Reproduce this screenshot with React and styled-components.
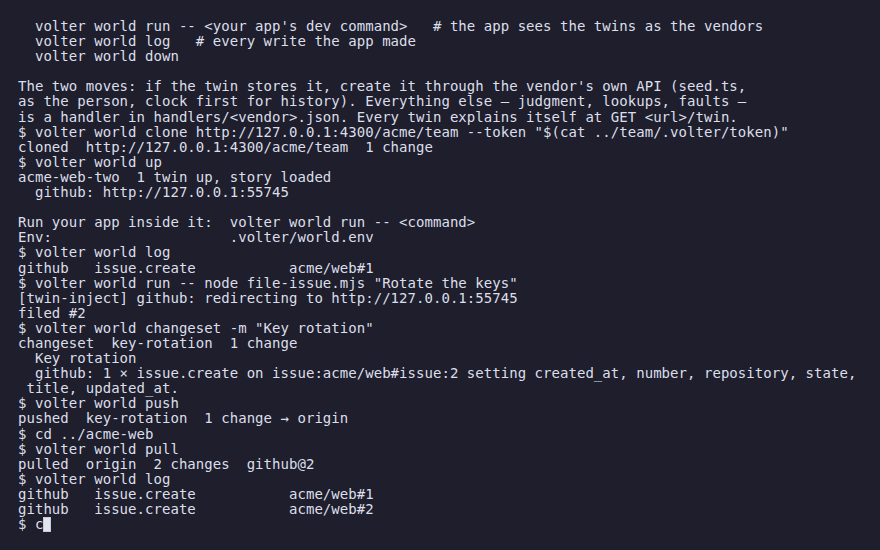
import React from "react";
import styled, { createGlobalStyle } from "styled-components";

const GlobalStyle = createGlobalStyle`
  html, body {
    margin: 0;
    padding: 0;
    background: #1e1e2c;
  }
`;

const Terminal = styled.div`
  width: 880px;
  height: 550px;
  box-sizing: border-box;
  padding: 19px 0 0 18px;
  background: #1e1e2c;
  color: #dcdfea;
  font-family: "DejaVu Sans Mono", "Liberation Mono", monospace;
  font-size: 14px;
  line-height: 15.1px;
  letter-spacing: 0.04px;
  overflow: hidden;
`;

const Line = styled.div`
  white-space: pre;
  height: 15.1px;
`;

const Cursor = styled.span`
  display: inline-block;
  width: 8px;
  height: 15px;
  vertical-align: -3px;
  background: #e2e4ee;
  box-shadow: inset 0 0 0 1px #c8cbd8;
`;

const lines = [
  "  volter world run -- <your app's dev command>   # the app sees the twins as the vendors",
  "  volter world log   # every write the app made",
  "  volter world down",
  "",
  "The two moves: if the twin stores it, create it through the vendor's own API (seed.ts,",
  "as the person, clock first for history). Everything else \u2014 judgment, lookups, faults \u2014",
  "is a handler in handlers/<vendor>.json. Every twin explains itself at GET <url>/twin.",
  '$ volter world clone http://127.0.0.1:4300/acme/team --token "$(cat ../team/.volter/token)"',
  "cloned  http://127.0.0.1:4300/acme/team  1 change",
  "$ volter world up",
  "acme-web-two  1 twin up, story loaded",
  "  github: http://127.0.0.1:55745",
  "",
  "Run your app inside it:  volter world run -- <command>",
  "Env:                     .volter/world.env",
  "$ volter world log",
  "github   issue.create           acme/web#1",
  '$ volter world run -- node file-issue.mjs "Rotate the keys"',
  "[twin-inject] github: redirecting to http://127.0.0.1:55745",
  "filed #2",
  '$ volter world changeset -m "Key rotation"',
  "changeset  key-rotation  1 change",
  "  Key rotation",
  "  github: 1 \u00d7 issue.create on issue:acme/web#issue:2 setting created_at, number, repository, state,",
  " title, updated_at.",
  "$ volter world push",
  "pushed  key-rotation  1 change \u2192 origin",
  "$ cd ../acme-web",
  "$ volter world pull",
  "pulled  origin  2 changes  github@2",
  "$ volter world log",
  "github   issue.create           acme/web#1",
  "github   issue.create           acme/web#2",
];

export default function App() {
  return (
    <>
      <GlobalStyle />
      <Terminal>
        {lines.map((l, i) => (
          <Line key={i}>{l}</Line>
        ))}
        <Line>
          $ c<Cursor />
        </Line>
      </Terminal>
    </>
  );
}
